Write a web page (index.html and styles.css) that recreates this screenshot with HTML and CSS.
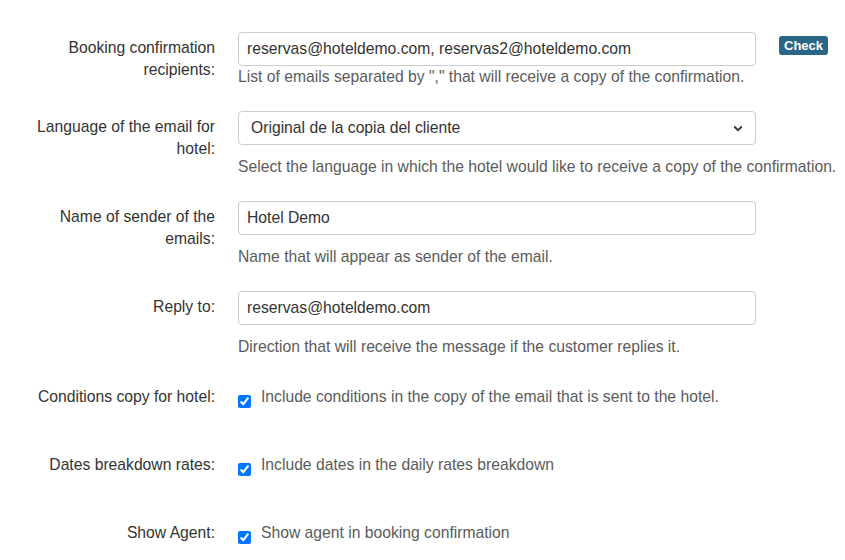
FILE: index.html
```html
<!DOCTYPE html>
<html>
<head>
<meta charset="utf-8">
<link rel="stylesheet" href="styles.css">
</head>
<body>
<form class="form">
  <div class="row r1">
    <label class="lbl">Booking confirmation recipients:</label>
    <div class="ctrl">
      <div class="line">
        <input class="field" type="text" value="reservas@hoteldemo.com, reservas2@hoteldemo.com">
        <span class="check">Check</span>
      </div>
      <p class="help tight">List of emails separated by "," that will receive a copy of the confirmation.</p>
    </div>
  </div>
  <div class="row">
    <label class="lbl">Language of the email for hotel:</label>
    <div class="ctrl">
      <div class="select">
        <span>Original de la copia del cliente</span>
        <svg class="chev" width="10" height="7" viewBox="0 0 10 7"><path d="M1.2 1.5 L5 5.2 L8.8 1.5" fill="none" stroke="#333" stroke-width="1.8"/></svg>
      </div>
      <p class="help">Select the language in which the hotel would like to receive a copy of the confirmation.</p>
    </div>
  </div>
  <div class="row">
    <label class="lbl">Name of sender of the emails:</label>
    <div class="ctrl">
      <input class="field" type="text" value="Hotel Demo">
      <p class="help">Name that will appear as sender of the email.</p>
    </div>
  </div>
  <div class="row r4">
    <label class="lbl">Reply to:</label>
    <div class="ctrl">
      <input class="field" type="text" value="reservas@hoteldemo.com">
      <p class="help">Direction that will receive the message if the customer replies it.</p>
    </div>
  </div>
  <div class="row cb">
    <label class="lbl">Conditions copy for hotel:</label>
    <label class="opt"><input type="checkbox" checked><span>Include conditions in the copy of the email that is sent to the hotel.</span></label>
  </div>
  <div class="row cb">
    <label class="lbl">Dates breakdown rates:</label>
    <label class="opt"><input type="checkbox" checked><span>Include dates in the daily rates breakdown</span></label>
  </div>
  <div class="row cb last">
    <label class="lbl">Show Agent:</label>
    <label class="opt"><input type="checkbox" checked><span>Show agent in booking confirmation</span></label>
  </div>
</form>
</body>
</html>
```

FILE: styles.css
```css
html, body {
  margin: 0;
  padding: 0;
  background: #fff;
}
body {
  font-family: "Liberation Sans", Arial, sans-serif;
  font-size: 15.7px;
  line-height: 22px;
  color: #333;
  width: 845px;
  height: 560px;
  overflow: hidden;
}
.form {
  padding: 32px 0 0 15px;
}
.row {
  display: grid;
  grid-template-columns: 200px 1fr;
  column-gap: 23px;
  margin-bottom: 23px;
}
.row.r1 {
  margin-bottom: 23px;
}
.row.r4 {
  margin-bottom: 28px;
}
.lbl {
  text-align: right;
  padding-top: 5px;
  color: #333;
}
.ctrl {
  display: flex;
  flex-direction: column;
  align-items: flex-start;
}
.line {
  display: flex;
  align-items: flex-start;
}
.field, .select {
  box-sizing: border-box;
  width: 518px;
  height: 34px;
  border: 1px solid #ccc;
  border-radius: 4px;
  padding: 0 8px;
  font: inherit;
  color: #333;
  background: #fff;
  margin: 0;
  outline: none;
}
.select {
  display: flex;
  align-items: center;
  justify-content: space-between;
  padding: 0 12px 0 12px;
}
.chev {
  display: block;
}
.check {
  margin: 4px 0 0 23px;
  background: #2b6686;
  color: #fff;
  font-weight: bold;
  font-size: 13px;
  line-height: 19px;
  padding: 0 5px;
  border-radius: 3px;
}
.help {
  margin: 11px 0 0;
  color: #5b5b5b;
  white-space: nowrap;
}
.help.tight {
  margin-top: 0;
}
.row.cb {
  margin-bottom: 46px;
}
.row.cb.last {
  margin-bottom: 0;
}
.row.cb .lbl {
  padding-top: 0;
}
.opt {
  display: flex;
  align-items: flex-start;
  color: #5b5b5b;
}
.opt input {
  width: 13px;
  height: 13px;
  margin: 9px 10px 0 0;
  flex: none;
}
```
